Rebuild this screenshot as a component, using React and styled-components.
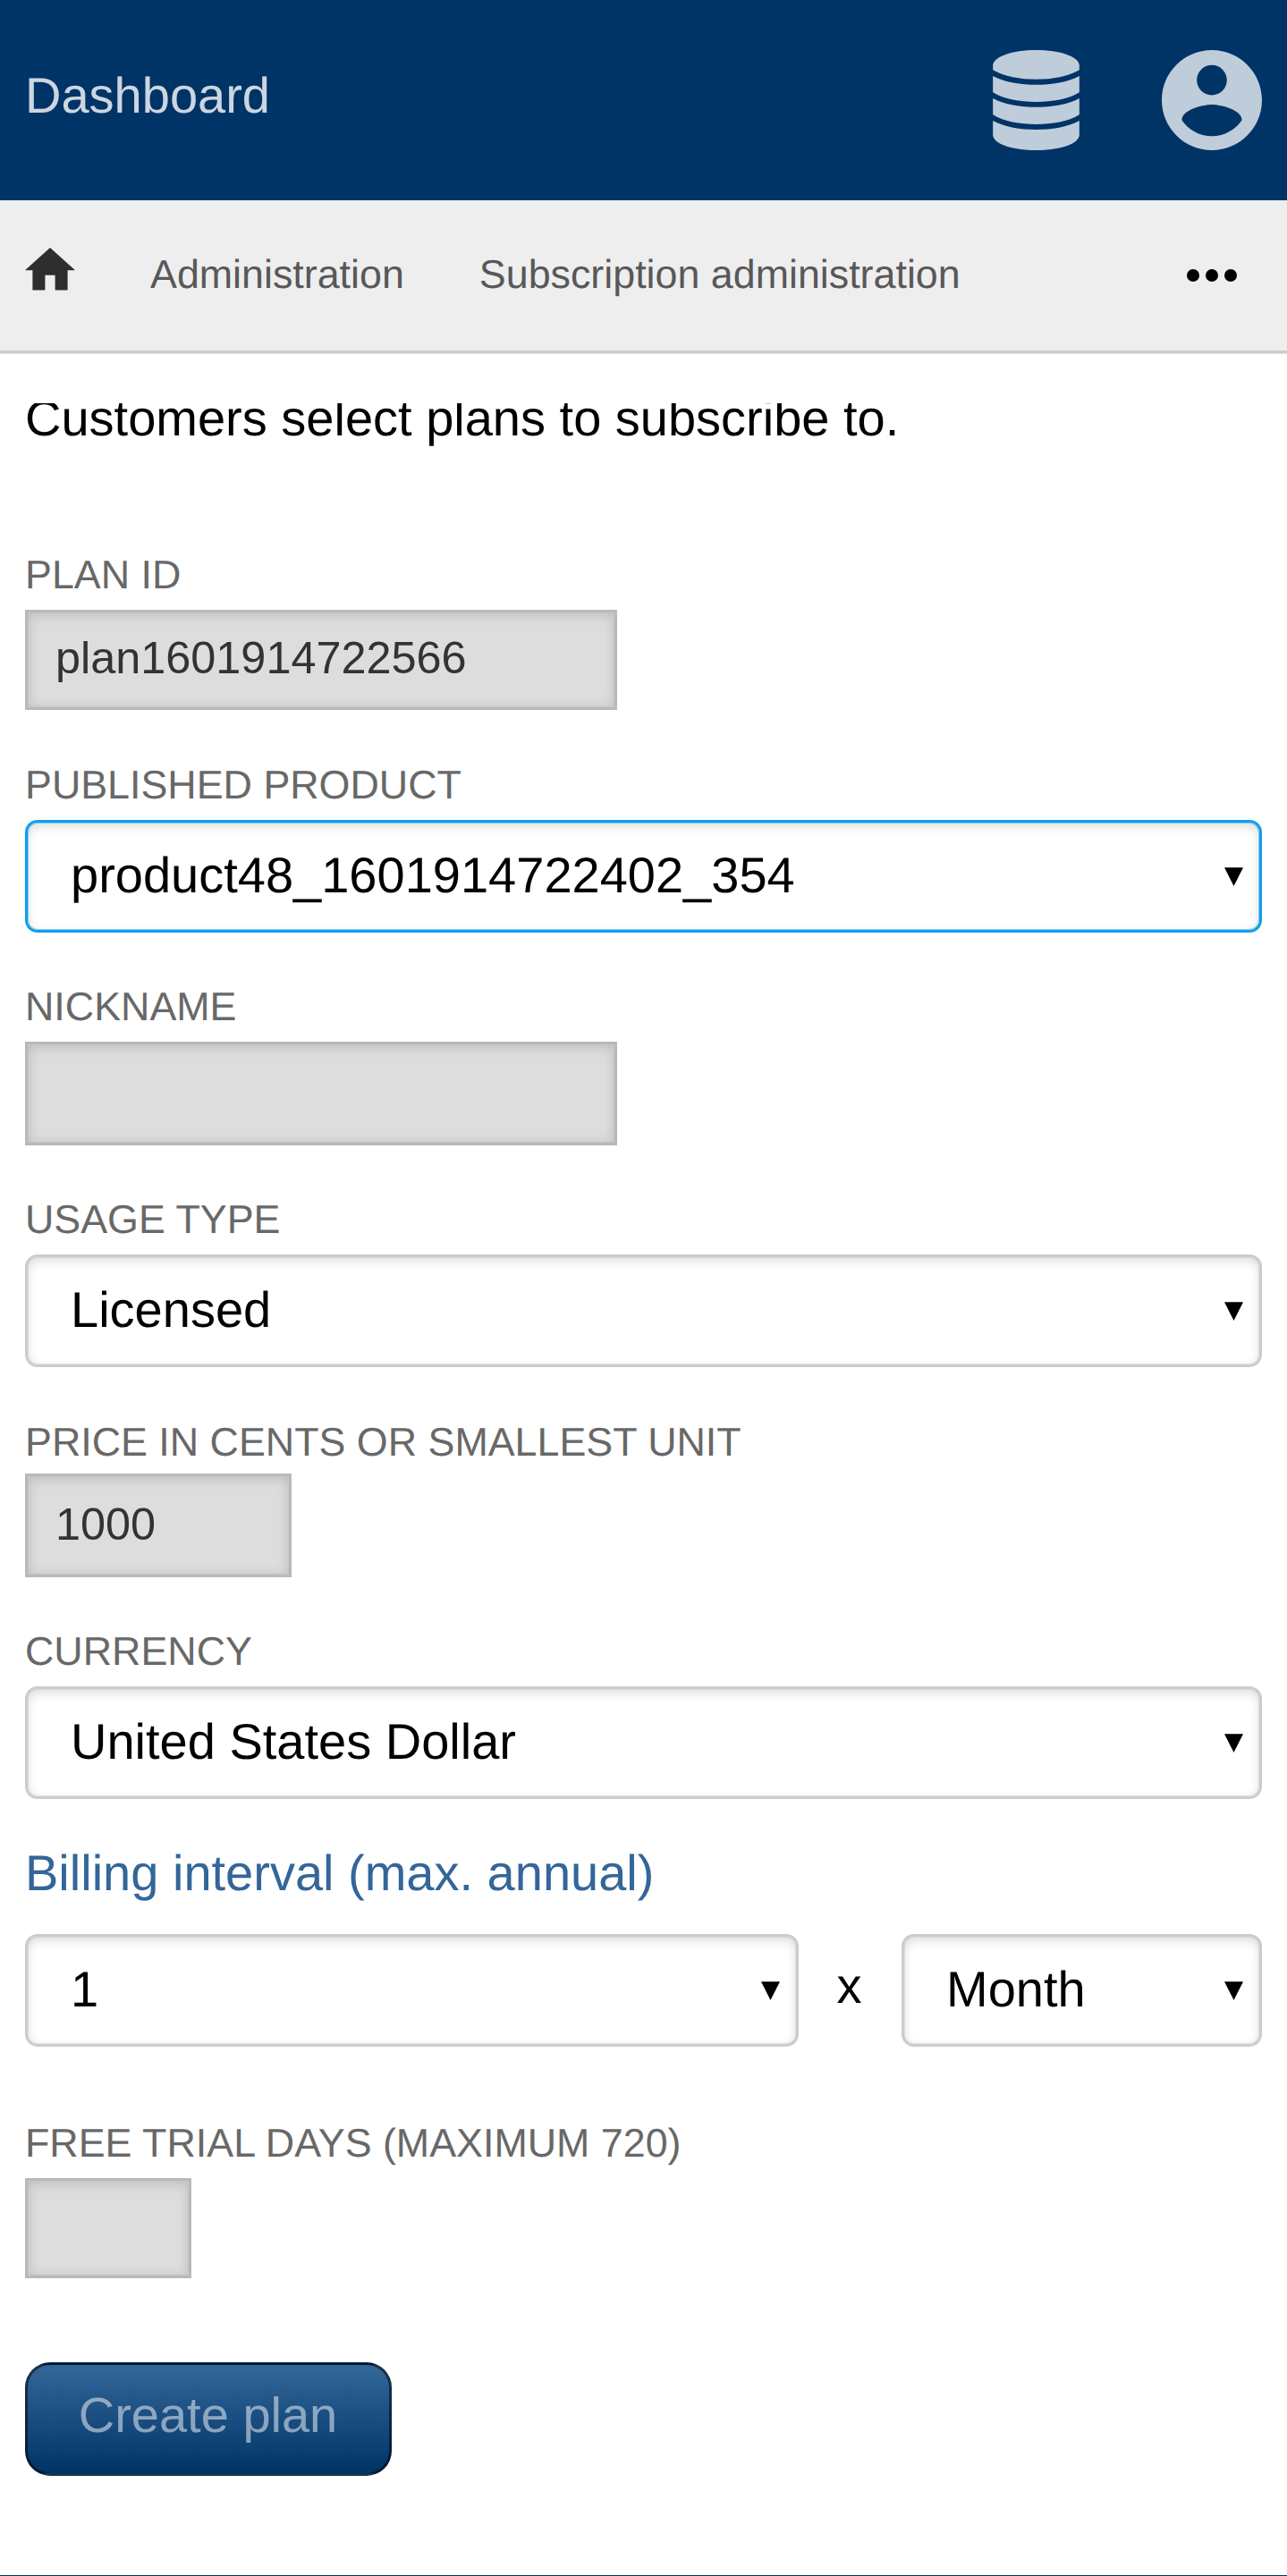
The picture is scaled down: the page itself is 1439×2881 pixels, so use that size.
import React from "react";
import styled, { createGlobalStyle } from "styled-components";

const GlobalStyle = createGlobalStyle`
  html, body { margin: 0; padding: 0; background: #fff; }
  * { box-sizing: border-box; }
  body {
    font-family: "Liberation Sans", Arial, sans-serif;
    font-size: 56px;
    color: #000;
    text-rendering: geometricPrecision;
  }
`;

const Page = styled.div`
  display: flex;
  flex-direction: column;
  width: 1439px;
  height: 2881px;
  overflow: hidden;
  border-bottom: 1px solid #003366;
`;

const Header = styled.header`
  display: flex;
  align-items: center;
  justify-content: space-between;
  flex: none;
  height: 224px;
  padding: 0 28px;
  background: #003366;
`;

const Title = styled.div`
  color: rgba(255, 255, 255, 0.8);
  line-height: 64px;
  padding-bottom: 11px;
`;

const HeaderIcons = styled.div`
  display: flex;
  gap: 92px;
  color: #bfccd9;
`;

const Icon = styled.svg`
  display: block;
  flex: none;
  width: ${(p) => p.$w}px;
  height: ${(p) => p.$h}px;
  fill: currentColor;
`;

const Nav = styled.nav`
  display: flex;
  align-items: center;
  flex: none;
  height: 171px;
  padding: 0 42px 3px 28px;
  background: #eee;
  border-bottom: 3px solid #ccc;
  box-shadow: 0 1px 0 #e2e2e2;
`;

const Home = styled.a`
  display: flex;
  color: #2e2e2e;
  padding-bottom: 11px;
`;

const Crumb = styled.a`
  margin-left: 84px;
  font-size: 44.8px;
  line-height: 52px;
  color: #585858;
`;

const More = styled.div`
  display: flex;
  margin-left: auto;
  padding-top: 3px;
  color: #000;
`;

const Content = styled.main`
  flex: 1;
  min-height: 0;
  margin-top: 56px;
  padding: 0 28px;
  overflow: hidden;
`;

/* The intro is scrolled slightly under the top edge of the content area. */
const Intro = styled.p`
  margin: -15px 0 0;
  line-height: 64px;
`;

const Field = styled.div`
  display: flex;
  flex-direction: column;
  align-items: flex-start;
  margin-top: ${(p) => p.$gap}px;
`;

const Label = styled.label`
  height: ${(p) => (p.$tight ? 65 : 69)}px;
  font-size: 44.8px;
  line-height: 60px;
  color: #686868;
  text-transform: uppercase;
`;

const TextInput = styled.input`
  display: block;
  width: ${(p) => p.$width}px;
  height: ${(p) => p.$height}px;
  margin: 0;
  padding: 0 20px ${(p) => p.$lift || 0}px 31px;
  border: 3px solid #b9b9b9;
  border-radius: 0;
  outline: none;
  background: #ddd;
  box-shadow: inset 0 0 0 1px #c6c6c6, inset 0 2px 14px rgba(0, 0, 0, 0.17);
  font: 50.4px "Liberation Sans", Arial, sans-serif;
  color: #333;
`;

const SelectBox = styled.div`
  display: flex;
  align-items: center;
  justify-content: space-between;
  width: ${(p) => (p.$width ? `${p.$width}px` : "100%")};
  height: 126px;
  padding: 0 18px 0 ${(p) => p.$indent}px;
  border: 3px solid ${(p) => (p.$active ? "#109fec" : "#ccc")};
  border-radius: 14px;
  background: #fff;
  box-shadow: inset 0 0 0 1px ${(p) => (p.$active ? "rgba(16,159,236,.45)" : "rgba(204,204,204,.5)")},
    inset 0 4px 12px rgba(0, 0, 0, 0.14);
`;

const SelectValue = styled.span`
  line-height: 64px;
  padding-bottom: 3px;
`;

const Heading = styled.h2`
  margin: 51px 0 0;
  font-size: 56px;
  font-weight: 400;
  line-height: 64px;
  color: #336699;
`;

const IntervalRow = styled.div`
  display: flex;
  align-items: center;
  margin-top: 36px;
`;

const Times = styled.span`
  flex: 1;
  text-align: center;
  line-height: 64px;
  padding: 0 2px 10px 0;
`;

const SubmitButton = styled.button`
  display: block;
  width: 410px;
  height: 127px;
  margin: 94px 0 0;
  padding: 0 1px 11px 0;
  border: 3px solid rgba(0, 0, 0, 0.5);
  border-radius: 28px;
  background: linear-gradient(#336699, #003366);
  font: 56px "Liberation Sans", Arial, sans-serif;
  color: rgba(255, 255, 255, 0.5);
`;

function Select({ value, active, width, indent = 48 }) {
  return (
    <SelectBox $active={active} $width={width} $indent={indent}>
      <SelectValue>{value}</SelectValue>
      <Icon $w={21} $h={21} viewBox="0 0 21 21">
        <path d="M0 0.3H21L10.5 21Z" />
      </Icon>
    </SelectBox>
  );
}

export default function App() {
  return (
    <>
      <GlobalStyle />
      <Page>
        <Header>
          <Title>Dashboard</Title>
          <HeaderIcons>
            <Icon $w={97} $h={112} viewBox="0 0 290 336">
              <path d="M0 52C0 22 65 0 145 0S290 22 290 52V67C252 89 200 98.500 145 98.500S38 89 0 67Z" />
              <path d="M0 87C40 108 92 116.500 145 116.500S250 108 290 87V142C252 165 200 174 145 174S38 165 0 142Z" />
              <path d="M0 162C40 183 92 191.500 145 191.500S250 183 290 162V217C252 240 200 249 145 249S38 240 0 217Z" />
              <path d="M0 237C40 258 92 267 145 267S250 258 290 237V284C290 314 225 336 145 336S0 314 0 284Z" />
            </Icon>
            <Icon $w={112} $h={112} viewBox="2 2 20 20">
              <path d="M12 2C6.48 2 2 6.48 2 12s4.48 10 10 10 10-4.48 10-10S17.52 2 12 2zm0 3c1.66 0 3 1.34 3 3s-1.34 3-3 3-3-1.34-3-3 1.34-3 3-3zm0 14.200c-2.500 0-4.710-1.280-6-3.220.030-1.990 4-3.080 6-3.080 1.990 0 5.970 1.090 6 3.080-1.290 1.940-3.500 3.220-6 3.220z" />
            </Icon>
          </HeaderIcons>
        </Header>
        <Nav>
          <Home>
            <Icon $w={56} $h={47.6} viewBox="2 3 20 17">
              <path d="M10 20v-6h4v6h5v-8h3L12 3 2 12h3v8z" />
            </Icon>
          </Home>
          <Crumb>Administration</Crumb>
          <Crumb>Subscription administration</Crumb>
          <More>
            <Icon $w={84} $h={84} viewBox="0 0 24 24">
              <circle cx="6" cy="12" r="2" />
              <circle cx="12" cy="12" r="2" />
              <circle cx="18" cy="12" r="2" />
            </Icon>
          </More>
        </Nav>
        <Content>
          <Intro>Customers select plans to subscribe to.</Intro>
          <Field $gap={113}>
            <Label>Plan ID</Label>
            <TextInput $width={662} $height={112} $lift={5} defaultValue="plan1601914722566" />
          </Field>
          <Field $gap={54}>
            <Label>Published product</Label>
            <Select active value="product48_1601914722402_354" />
          </Field>
          <Field $gap={53}>
            <Label>Nickname</Label>
            <TextInput $width={662} $height={116} />
          </Field>
          <Field $gap={53}>
            <Label>Usage type</Label>
            <Select value="Licensed" />
          </Field>
          <Field $gap={54}>
            <Label $tight>Price in cents or smallest unit</Label>
            <TextInput $width={298} $height={116} $lift={4} defaultValue="1000" />
          </Field>
          <Field $gap={53}>
            <Label>Currency</Label>
            <Select value="United States Dollar" />
          </Field>
          <Heading>Billing interval (max. annual)</Heading>
          <IntervalRow>
            <Select value="1" width={865} />
            <Times>x</Times>
            <Select value="Month" width={403} indent={47} />
          </IntervalRow>
          <Field $gap={78}>
            <Label>Free trial days (maximum 720)</Label>
            <TextInput $width={186} $height={112} />
          </Field>
          <SubmitButton>Create plan</SubmitButton>
        </Content>
      </Page>
    </>
  );
}
